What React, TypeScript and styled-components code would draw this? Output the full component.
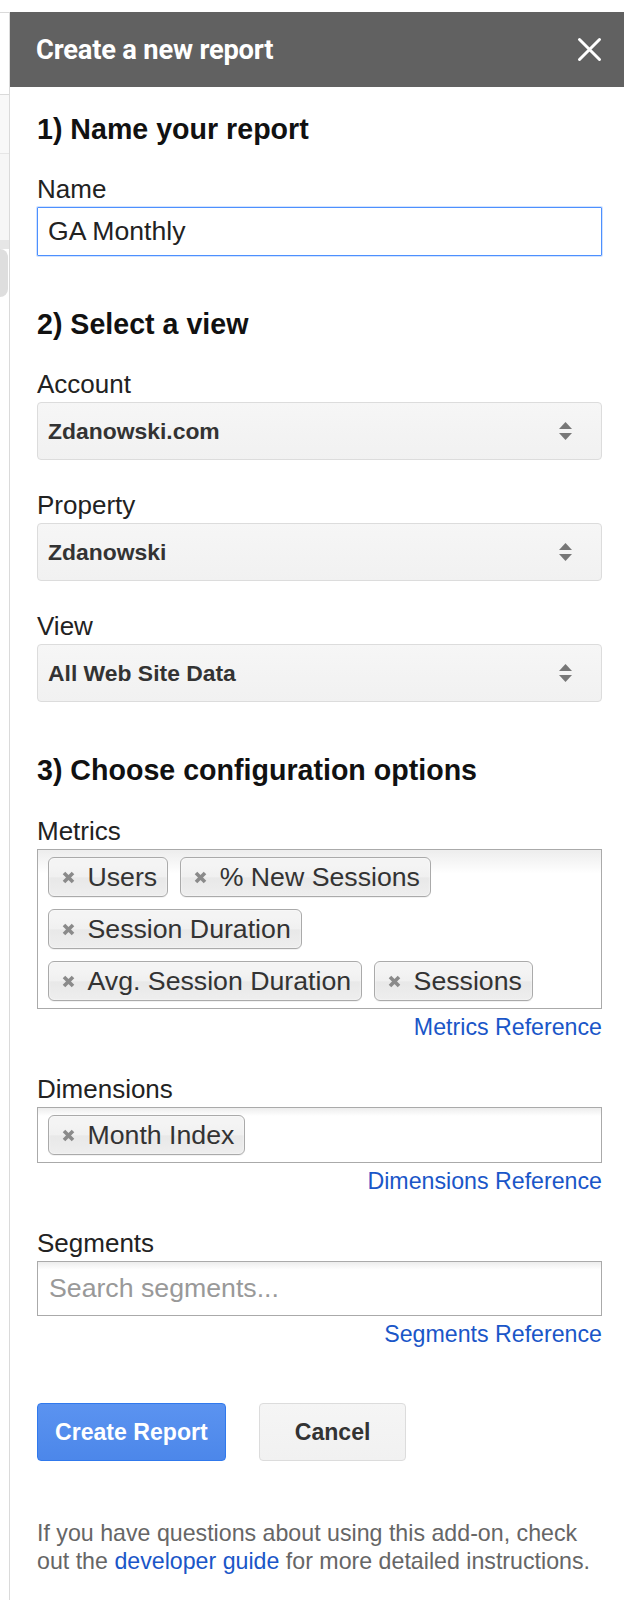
import React from 'react'
import styled, { createGlobalStyle } from 'styled-components'

const GlobalStyle = createGlobalStyle`
  html, body {
    margin: 0;
    padding: 0;
    background: #fff;
    overflow: hidden;
  }
  body {
    font-family: 'Liberation Sans', Arial, sans-serif;
    color: #222;
  }
  *, *::before, *::after {
    box-sizing: border-box;
  }
`

const Page = styled.div`
  display: flex;
  padding-top: 12px;
  height: 100vh;
`

const Gutter = styled.div`
  width: 10px;
  flex: none;
  display: flex;
  flex-direction: column;
  border-right: 1px solid #dadada;
`

const GutterBlock = styled.div<{ h: number; bg: string; line?: string }>`
  height: ${p => p.h}px;
  background: ${p => p.bg};
  border-top: 1px solid ${p => p.line || 'transparent'};
`

const GutterPill = styled.div`
  height: 48px;
  margin-right: 1px;
  background: #dedede;
  border-radius: 0 14px 14px 0;
`

const Panel = styled.div`
  flex: 1;
  min-width: 0;
`

const Header = styled.div`
  height: 75px;
  background: #616161;
  display: flex;
  align-items: center;
  justify-content: space-between;
  padding: 0 22px 0 26px;
`

const Title = styled.div`
  font-family: Roboto, 'Liberation Sans', sans-serif;
  font-weight: 700;
  font-size: 27.3px;
  color: #fff;
  letter-spacing: -0.2px;
`

const Close = styled.button`
  border: 0;
  background: none;
  padding: 0;
  width: 25px;
  height: 25px;
  display: flex;
  cursor: pointer;
`

const Body = styled.div`
  padding: 25px 22px 0 27px;
`

const Heading = styled.h2<{ top?: number }>`
  margin: ${p => p.top ?? 0}px 0 0;
  font-size: 28.6px;
  line-height: 34px;
  font-weight: 700;
  color: #111;
`

const Label = styled.div<{ top: number }>`
  margin-top: ${p => p.top}px;
  margin-bottom: 3px;
  font-size: 26px;
  line-height: 30px;
  color: #222;
`

const TextInput = styled.input`
  display: block;
  width: 100%;
  height: 49px;
  margin: 1px 0 0;
  padding: 0 10px;
  border: 1px solid #4d90fe;
  box-shadow: 0 0 0 1px rgba(77, 144, 254, 0.25);
  border-radius: 1px;
  font-family: inherit;
  font-size: 26.6px;
  color: #222;
  outline: none;
`

const Select = styled.div`
  height: 58px;
  margin-top: 1px;
  display: flex;
  align-items: center;
  justify-content: space-between;
  padding: 0 28px 0 10px;
  background: linear-gradient(#f6f6f6, #f1f1f1);
  border: 1px solid #dcdcdc;
  border-radius: 4px;
  font-size: 22.9px;
  font-weight: 700;
  color: #333;
`

const Chooser = styled.div<{ h: number }>`
  min-height: ${p => p.h}px;
  display: flex;
  flex-wrap: wrap;
  align-content: flex-start;
  gap: 12px;
  padding: 7px 10px;
  border: 1px solid #aaa;
  background: linear-gradient(#eee 1%, #fff 15%);
`

const Tag = styled.div`
  height: 40px;
  display: flex;
  align-items: center;
  gap: 12.5px;
  padding: 0 10px 0 13px;
  border: 1px solid #aaa;
  border-radius: 6px;
  background: linear-gradient(#f4f4f4 20%, #f0f0f0 50%, #e8e8e8 52%, #eee 100%);
  box-shadow: 0 0 2px #fff inset, 0 1px 0 rgba(0, 0, 0, 0.05);
  font-size: 26.7px;
  line-height: 38px;
  color: #333;
  white-space: nowrap;
`

const Placeholder = styled.div`
  font-size: 26.7px;
  line-height: 39px;
  color: #999;
  padding-left: 1px;
`

const RefLink = styled.a`
  display: block;
  margin-top: 5px;
  text-align: right;
  font-size: 23.2px;
  line-height: 26px;
  color: #1a56c8;
  text-decoration: none;
`

const Buttons = styled.div`
  display: flex;
  gap: 33px;
  margin-top: 56px;
`

const Button = styled.button<{ primary?: boolean }>`
  height: 58px;
  padding: 0 ${p => (p.primary ? 17 : 35)}px;
  border-radius: 4px;
  border: 1px solid ${p => (p.primary ? '#3079ed' : '#dcdcdc')};
  background: ${p =>
    p.primary
      ? 'linear-gradient(#5b93f0, #4c87ea)'
      : 'linear-gradient(#f5f5f5, #f1f1f1)'};
  color: ${p => (p.primary ? '#fff' : '#333')};
  font-family: inherit;
  font-size: 23.1px;
  font-weight: 700;
  cursor: pointer;
`

const Footer = styled.p`
  margin: 58px 0 0;
  font-size: 23.2px;
  line-height: 28px;
  color: #666;
  a {
    color: #1a56c8;
    text-decoration: none;
  }
`

const SortArrows = () => (
  <svg width="15" height="20" viewBox="0 0 15 20">
    <path d="M7.5 1 L14 8 L1 8 Z" fill="#777" />
    <path d="M1 12 L14 12 L7.5 19 Z" fill="#777" />
  </svg>
)

const RemoveIcon = () => (
  <svg width="13" height="13" viewBox="0 0 13 13">
    <path d="M2 2 L11 11 M11 2 L2 11" stroke="#8a8a8a" strokeWidth="3.6" />
  </svg>
)

const CloseIcon = () => (
  <svg width="25" height="25" viewBox="0 0 25 25">
    <path
      d="M2.5 2.5 L22.5 22.5 M22.5 2.5 L2.5 22.5"
      stroke="#fff"
      strokeWidth="3"
      strokeLinecap="round"
    />
  </svg>
)

const selects = [
  { label: 'Account', value: 'Zdanowski.com', top: 28 },
  { label: 'Property', value: 'Zdanowski', top: 30 },
  { label: 'View', value: 'All Web Site Data', top: 30 }
]

const metrics = [
  'Users',
  '% New Sessions',
  'Session Duration',
  'Avg. Session Duration',
  'Sessions'
]

const Tags: React.FC<{ items: string[] }> = ({ items }) => (
  <>
    {items.map(item => (
      <Tag key={item}>
        <RemoveIcon />
        {item}
      </Tag>
    ))}
  </>
)

const App: React.FC = () => (
  <>
    <GlobalStyle />
    <Page>
      <Gutter>
        <GutterBlock h={82} bg="#fff" line="#dadada" />
        <GutterBlock h={59} bg="#f8f8f8" line="#dadada" />
        <GutterBlock h={87} bg="#f6f6f6" line="#e6e6e6" />
        <GutterBlock h={9} bg="#e6e6e6" />
        <GutterPill />
      </Gutter>
      <Panel>
        <Header>
          <Title>Create a new report</Title>
          <Close aria-label="Close">
            <CloseIcon />
          </Close>
        </Header>
        <Body>
          <Heading>1) Name your report</Heading>
          <Label top={28}>Name</Label>
          <TextInput defaultValue="GA Monthly" />

          <Heading top={51}>2) Select a view</Heading>
          {selects.map(s => (
            <React.Fragment key={s.label}>
              <Label top={s.top}>{s.label}</Label>
              <Select>
                {s.value}
                <SortArrows />
              </Select>
            </React.Fragment>
          ))}

          <Heading top={51}>3) Choose configuration options</Heading>
          <Label top={29}>Metrics</Label>
          <Chooser h={160}>
            <Tags items={metrics} />
          </Chooser>
          <RefLink href="#">Metrics Reference</RefLink>

          <Label top={34}>Dimensions</Label>
          <Chooser h={56}>
            <Tags items={['Month Index']} />
          </Chooser>
          <RefLink href="#">Dimensions Reference</RefLink>

          <Label top={34}>Segments</Label>
          <Chooser h={55}>
            <Placeholder>Search segments...</Placeholder>
          </Chooser>
          <RefLink href="#">Segments Reference</RefLink>

          <Buttons>
            <Button primary>Create Report</Button>
            <Button>Cancel</Button>
          </Buttons>

          <Footer>
            If you have questions about using this add-on, check out the{' '}
            <a href="#">developer guide</a> for more detailed instructions.
          </Footer>
        </Body>
      </Panel>
    </Page>
  </>
)

export default App
